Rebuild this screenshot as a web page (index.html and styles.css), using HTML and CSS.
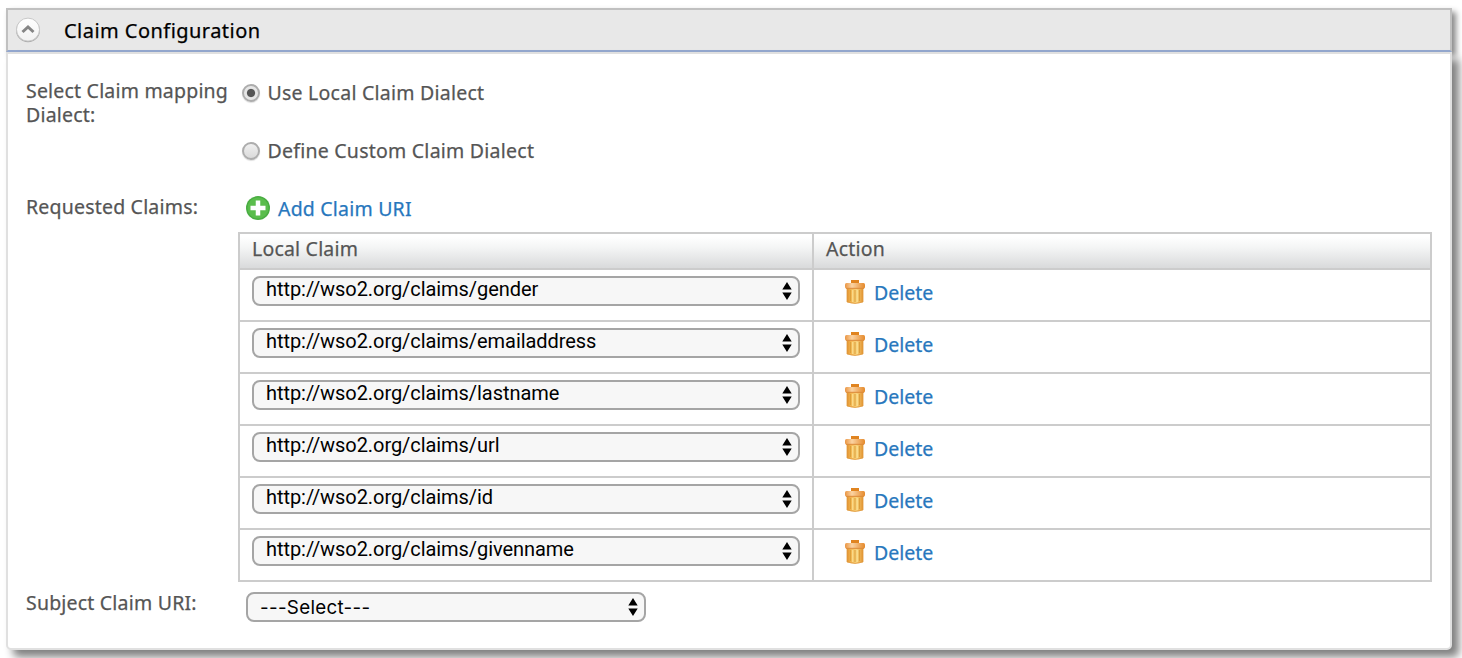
FILE: index.html
```html
<!DOCTYPE html>
<html lang="en">
<head>
<meta charset="utf-8">
<title>Claim Configuration</title>
<link rel="stylesheet" href="styles.css">
</head>
<body>
<svg class="defs" width="0" height="0">
  <defs>
    <linearGradient id="bin" x1="0" x2="1" y1="0" y2="0"><stop offset="0" stop-color="#e2932f"/><stop offset=".3" stop-color="#f5bb58"/><stop offset=".6" stop-color="#f8d27c"/><stop offset="1" stop-color="#e2932f"/></linearGradient>
    <linearGradient id="lid" x1="0" x2="1" y1="0" y2="0"><stop offset="0" stop-color="#ea9645"/><stop offset=".35" stop-color="#fbd3a2"/><stop offset="1" stop-color="#e58a2c"/></linearGradient>
    <linearGradient id="knob" x1="0" x2="0" y1="0" y2="1"><stop offset="0" stop-color="#ffffff"/><stop offset="1" stop-color="#f2f2f2"/></linearGradient>
  </defs>
  <symbol id="trash" viewBox="0 0 20 24">
    <path d="M6 0h8v4H6z" fill="#e08420"/>
    <path d="M2 8h16v14q-8 3-16 0z" fill="url(#bin)" stroke="#e09a40" stroke-width=".8"/>
    <path d="M5.500 10v11M10 10v12M14.500 10v11" stroke="#dba03c" stroke-width="1"/>
    <path d="M7.700 10v12M12.300 10v12" stroke="#fbe193" stroke-width="1"/>
    <rect x="0" y="3" width="20" height="5.500" rx="1.500" fill="url(#lid)"/>
    <path d="M1 8.300h18" stroke="#dc8a38" stroke-width="1"/>
  </symbol>
  <symbol id="arrows" viewBox="0 0 10 18"><path d="M5 0l4.700 7.500H.3zM5 18L.3 10.500h9.400z" fill="#000"/></symbol>
</svg>
<section class="panel">
  <header class="panel-head">
    <svg class="toggle" width="26" height="26" viewBox="0 0 26 26"><circle cx="13" cy="13.400" r="11.900" fill="#aaa"/><circle cx="13" cy="12.600" r="11.500" fill="url(#knob)" stroke="#c8c8c8"/><path d="M7.500 15l5.500-5 5.500 5" fill="none" stroke="#858585" stroke-width="3"/></svg>
    <h2 class="title">Claim Configuration</h2>
  </header>
  <div class="panel-body">
    <div class="row dialect">
      <div class="label wrap">Select Claim mapping Dialect:</div>
      <div class="radios">
        <label class="radio"><span class="dot on"></span><span>Use Local Claim Dialect</span></label>
        <label class="radio"><span class="dot"></span><span>Define Custom Claim Dialect</span></label>
      </div>
    </div>
    <div class="row claims">
      <div class="label">Requested Claims:</div>
      <div>
        <a class="add"><svg width="24" height="24" viewBox="0 0 24 24"><circle cx="12" cy="12" r="12" fill="#49ad42"/><circle cx="12" cy="12" r="10.500" fill="#5abd4c"/><path d="M12 4.500v15M4.500 12h15" stroke="#fff" stroke-width="4.500"/></svg><span>Add Claim URI</span></a>
        <div class="table">
          <div class="tr th"><div class="td">Local Claim</div><div class="td">Action</div></div>
          <div class="tr"><div class="td"><div class="select"><span>http://wso2.org/claims/gender</span><svg><use href="#arrows"/></svg></div></div><div class="td"><a class="del"><svg><use href="#trash"/></svg><span>Delete</span></a></div></div>
          <div class="tr"><div class="td"><div class="select"><span>http://wso2.org/claims/emailaddress</span><svg><use href="#arrows"/></svg></div></div><div class="td"><a class="del"><svg><use href="#trash"/></svg><span>Delete</span></a></div></div>
          <div class="tr"><div class="td"><div class="select"><span>http://wso2.org/claims/lastname</span><svg><use href="#arrows"/></svg></div></div><div class="td"><a class="del"><svg><use href="#trash"/></svg><span>Delete</span></a></div></div>
          <div class="tr"><div class="td"><div class="select"><span>http://wso2.org/claims/url</span><svg><use href="#arrows"/></svg></div></div><div class="td"><a class="del"><svg><use href="#trash"/></svg><span>Delete</span></a></div></div>
          <div class="tr"><div class="td"><div class="select"><span>http://wso2.org/claims/id</span><svg><use href="#arrows"/></svg></div></div><div class="td"><a class="del"><svg><use href="#trash"/></svg><span>Delete</span></a></div></div>
          <div class="tr"><div class="td"><div class="select"><span>http://wso2.org/claims/givenname</span><svg><use href="#arrows"/></svg></div></div><div class="td"><a class="del"><svg><use href="#trash"/></svg><span>Delete</span></a></div></div>
        </div>
      </div>
    </div>
    <div class="row subject">
      <div class="label">Subject Claim URI:</div>
      <div class="select subject-select"><span>---Select---</span><svg><use href="#arrows"/></svg></div>
    </div>
  </div>
</section>
</body>
</html>
```
FILE: styles.css
```css
* { box-sizing: border-box; }
html, body { height: 100%; overflow: hidden; }
body { margin: 0; padding: 8px 10px 0 6px; background: #fff; color: #555; font: 19.5px/24px "Noto Sans", sans-serif; letter-spacing: .2px; -webkit-text-stroke: .25px; }
svg { display: block; flex: none; }
.defs { position: absolute; }
.panel-head { height: 44px; display: flex; align-items: center; gap: 23px; padding-left: 7px; background: #e8e8e8; border: 2px solid #c0c0c0; border-bottom-color: #93a7cf; box-shadow: 4px 4px 6px #888; }
.title { margin: 0; padding-top: 2px; font-size: 20px; font-weight: 400; color: #000; letter-spacing: .46px; }
.panel-body { position: relative; height: 598px; border: 2px solid #e0e0e0; border-radius: 0 0 5px 5px; background: #fff; box-shadow: 7px 7px 8px #808080; padding: 24px 18px 0; }
.row { display: grid; grid-template-columns: 212px 1194px; }
.dialect { height: 116px; }
.label { padding-top: 1px; }
.radios { padding: 3px 0 0 4px; }
.radio { display: flex; align-items: center; gap: 7.5px; height: 24px; margin-bottom: 34px; letter-spacing: .24px; }
.dot { width: 18px; height: 18px; border: 2px solid #adadad; border-radius: 50%; background: linear-gradient(#f0f0f0, #dadada); box-shadow: 0 1px 1px #ddd; }
.dot.on { background: radial-gradient(circle, #555 3.6px, #e6e6e6 4.6px); }
.claims { height: 388px; }
.add { display: flex; align-items: center; gap: 8px; height: 24px; margin: 2px 0 12px 8px; color: #2777bd; }
.add span, .del span { padding-top: 2px; }
.table { border: 2px solid #ccc; border-bottom: 0; }
.tr { display: grid; grid-template-columns: 574px 1fr; height: 52px; border-bottom: 2px solid #ccc; }
.td { padding: 6px 12px; }
.td:first-child { border-right: 2px solid #ccc; }
.th { height: 36px; background: linear-gradient(#fff 8%, #f4f5f5 40%, #d9dadb); }
.th .td { padding-top: 3px; }
.select { display: flex; justify-content: space-between; height: 30px; width: 548px; padding: 0 6px 0 12px; border: 2px solid #a5a5a5; border-radius: 8px; background: #f7f7f7; color: #000; font: 20px/23px Roboto, sans-serif; letter-spacing: -.06px; white-space: nowrap; -webkit-text-stroke: 0; }
.select svg { width: 10px; height: 18px; margin-top: 4px; }
.del { display: flex; align-items: center; gap: 9.5px; height: 24px; margin: 4px 0 0 18.5px; color: #2777bd; letter-spacing: 0; }
.del svg { width: 20px; height: 24px; }
.subject .label { padding-top: 9px; }
.subject-select { width: 400px; margin: 10px 0 0 8px; line-height: 27px; letter-spacing: .3px; font-family: Inter, sans-serif; font-size: 18.8px; }
```
